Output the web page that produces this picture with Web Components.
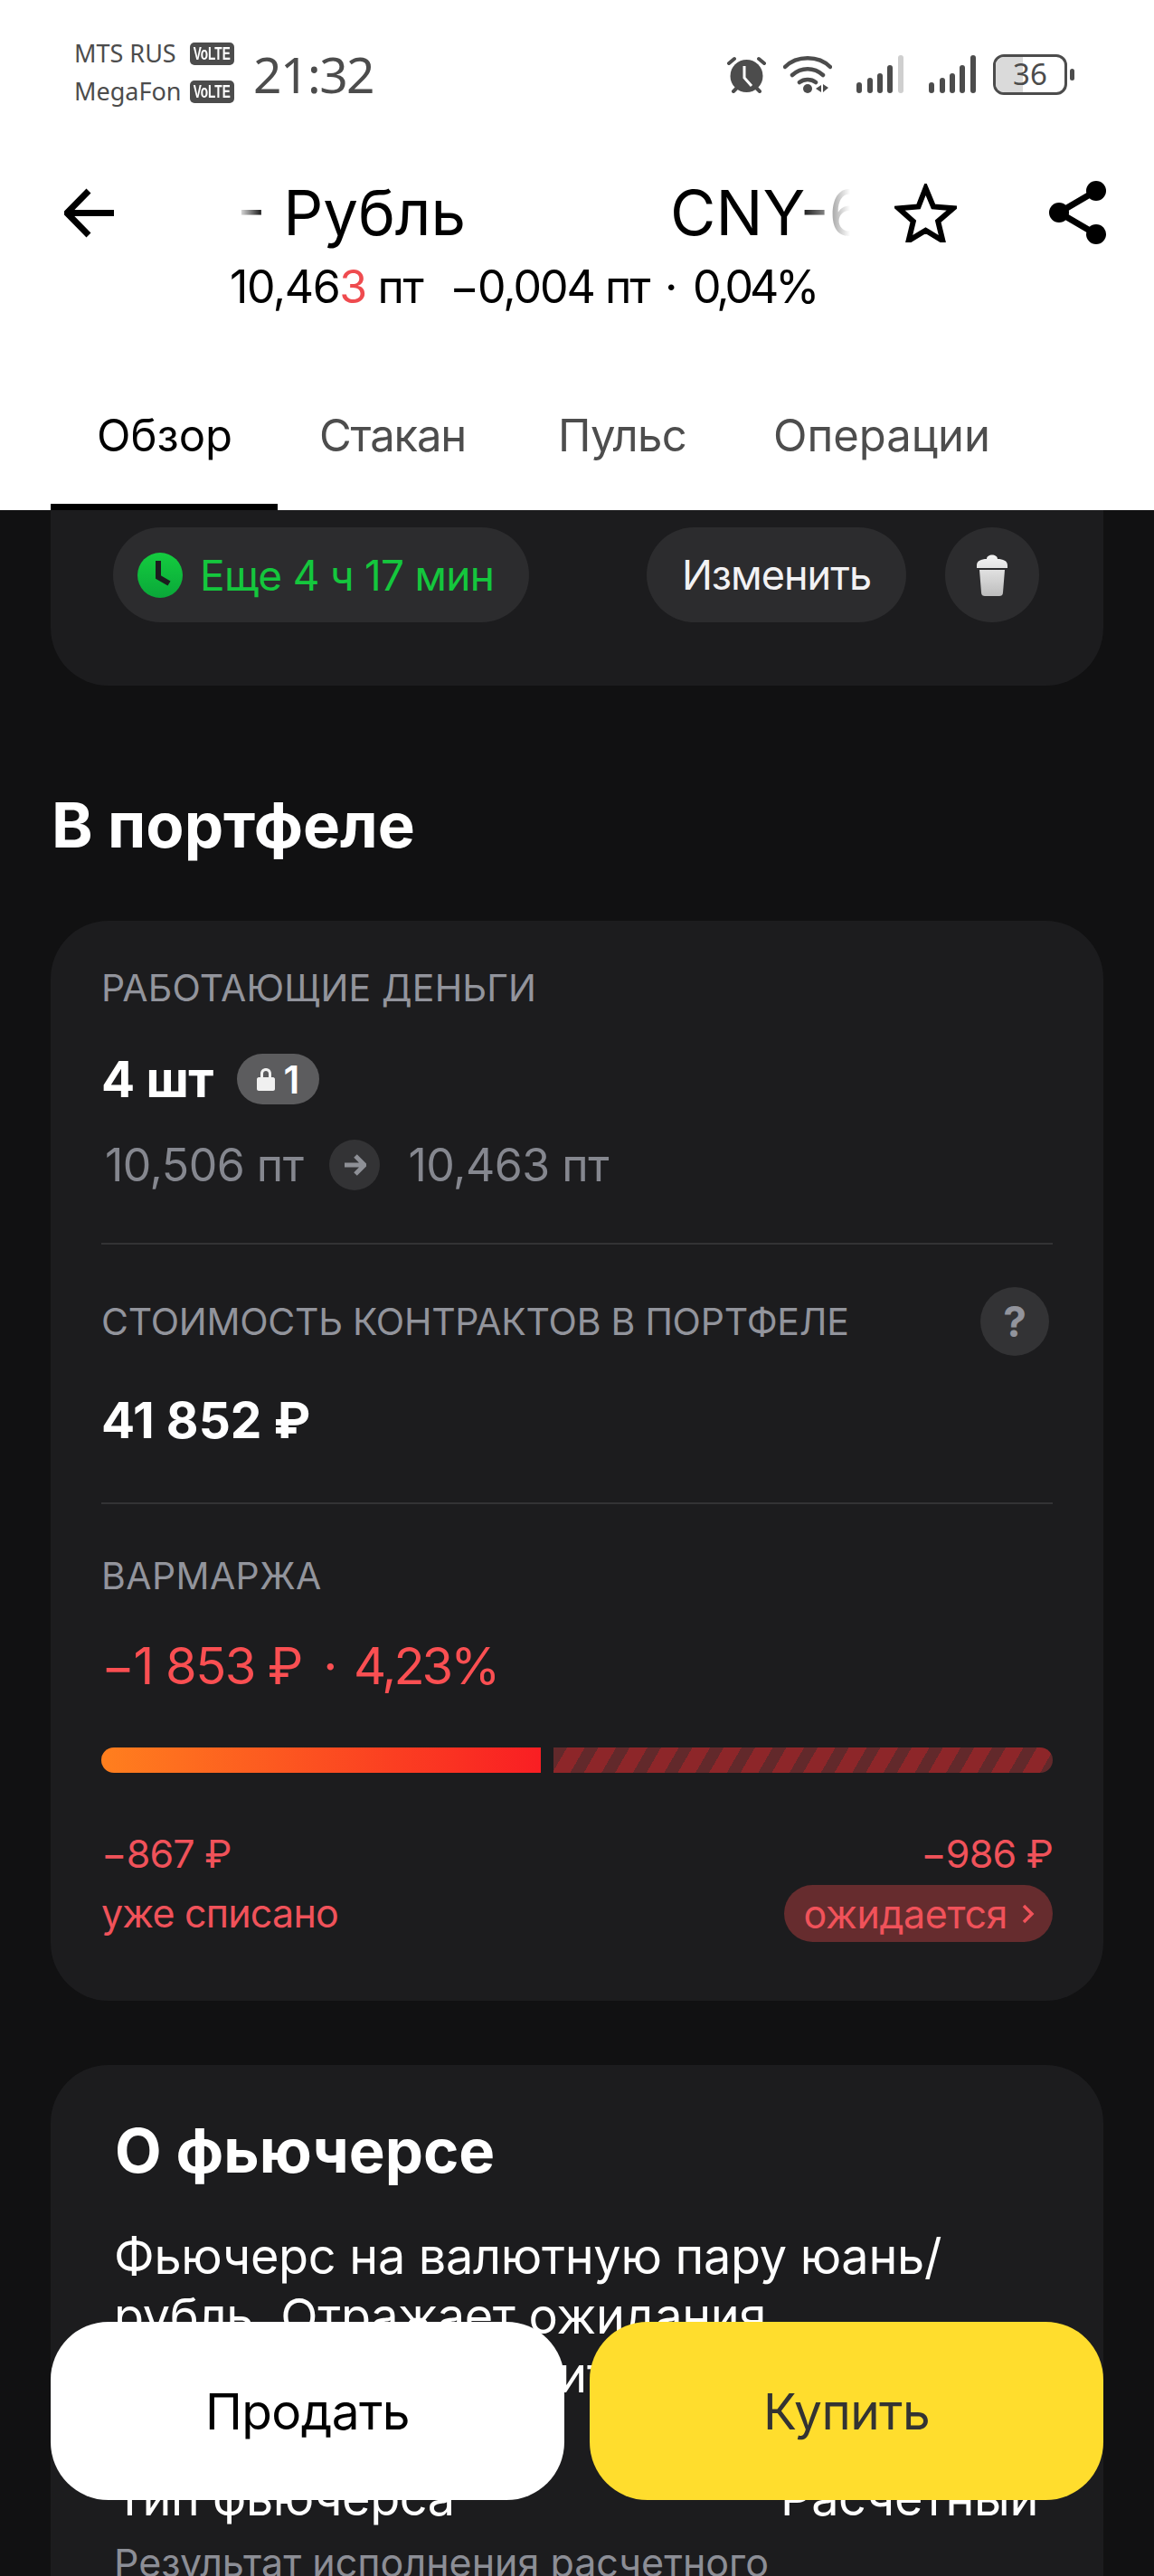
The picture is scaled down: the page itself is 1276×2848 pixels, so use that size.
<!DOCTYPE html>
<html lang="ru">
<head>
<meta charset="utf-8">
<title>CNY</title>
<style>
  html, body { margin: 0; padding: 0; background: #111112; }
  body { width: 1276px; height: 2848px; overflow: hidden; position: relative; font-family: Inter, "Noto Sans", sans-serif; }
</style>
</head>
<body>
<mx-status-bar></mx-status-bar>
<mx-top-bar></mx-top-bar>
<mx-tabs></mx-tabs>
<mx-timer-card></mx-timer-card>
<mx-section-title>В портфеле</mx-section-title>
<mx-portfolio-card></mx-portfolio-card>
<mx-about-card></mx-about-card>
<mx-action-bar></mx-action-bar>

<script>
// small helper, every element is the same: open shadow root + own style
class Base extends HTMLElement {
  constructor() {
    super();
    this.attachShadow({mode: 'open'});
    this.shadowRoot.innerHTML = this.constructor.markup;
  }
}

class StatusBar extends Base {
  static markup = `
    <style>
      :host { display: flex; align-items: flex-start; height: 180px; background: #fff; color: #4c4c4c; font-family: "Noto Sans", sans-serif; box-sizing: border-box; padding: 44px 88px 0 82px; }
      .ops { display: grid; grid-template-columns: 128px auto; row-gap: 12px; font-size: 27px; line-height: 30px; align-items: center; }
      .lte { display: block; width: 49px; height: 25px; border-radius: 5px; background: #4c4c4c; color: #fff; font: 700 20px/25px "Liberation Sans", sans-serif; text-align: center; overflow: hidden; }
      .lte span { display: inline-block; transform: scaleX(.68); transform-origin: center; margin: 0 -12px; }
      .time { font-size: 55px; line-height: 60px; margin: 8px 0 0 21px; letter-spacing: -1.5px; }
      .icons { margin-left: auto; display: flex; align-items: center; margin-top: 15px; height: 46px; }
      svg { display: block; }
      .batt { position: relative; width: 82px; height: 45px; box-sizing: border-box; border: 3px solid #4c4c4c; border-radius: 12px; overflow: hidden; font-size: 33px; line-height: 38px; text-align: center; }
      .batt::before { content: ""; position: absolute; left: 0; top: 0; bottom: 0; width: 40%; background: #dadada; }
      .batt span { position: relative; }
      .cap { width: 5px; height: 13px; background: #4c4c4c; border-radius: 3px; margin-left: 3px; }
    </style>
    <div class="ops">
      <span>MTS RUS</span><span class="lte"><span>VoLTE</span></span>
      <span>MegaFon</span><span class="lte"><span>VoLTE</span></span>
    </div>
    <div class="time">21:32</div>
    <div class="icons">
      <svg width="45" height="42" viewBox="0 0 45 42"><circle cx="22.5" cy="23" r="18" fill="#4c4c4c"/><path d="M3 9l6-5M42 9l-6-5M8 40l3-3M37 40l-3-3" stroke="#4c4c4c" stroke-width="4" stroke-linecap="round"/><path d="M20 12v13l8 9" fill="none" stroke="#fff" stroke-width="3"/></svg>
      <svg style="margin-left:18px" width="54" height="42" viewBox="0 0 54 42"><path d="M2 13C15 0 39 0 52 13M10 22c10-9 24-9 34 0M18 30c5-4 13-4 18 0" fill="none" stroke="#4c4c4c" stroke-width="4.5" stroke-linecap="round"/><circle cx="27" cy="37" r="5" fill="#4c4c4c"/><path d="M36 37l6-4v8zM44 32v9l6-5z" fill="#4c4c4c"/></svg>
      <svg style="margin-left:27px" width="53" height="42" viewBox="0 0 53 42"><g stroke-width="6" stroke-linecap="round" stroke="#4c4c4c"><path d="M3 33v6M15 28v11M26 23v16M37 14v25"/><path d="M49 3v36" stroke="#cfcfcf"/></g></svg>
      <svg style="margin-left:27px" width="53" height="42" viewBox="0 0 53 42"><g stroke-width="6" stroke-linecap="round" stroke="#4c4c4c"><path d="M3 33v6M15 28v11M26 23v16M37 14v25M49 3v36"/></g></svg>
      <div class="batt" style="margin-left:18px"><span>36</span></div>
      <div class="cap"></div>
    </div>`;
}

class TopBar extends Base {
  static markup = `
    <style>
      :host { display: block; background: #fff; height: 110px; position: relative; color: #000; font-family: Inter, "Noto Sans", sans-serif; }
      .row { display: flex; align-items: center; height: 110px; padding-left: 71px; padding-right: 53px; }
      .title { width: 678px; margin-left: 136px; overflow: hidden; white-space: nowrap; font-size: 69px; line-height: 110px;
        -webkit-mask-image: linear-gradient(90deg, transparent 0, #000 30px, #000 620px, transparent 678px);
        mask-image: linear-gradient(90deg, transparent 0, #000 30px, #000 620px, transparent 678px); }
      .gap { display: inline-block; width: 226px; }
      .star { margin-left: 49px; }
      .share { margin-left: auto; }
      svg { display: block; flex: none; }
    </style>
    <div class="row">
      <svg width="55" height="55" viewBox="0 0 55 55"><path d="M27 3L3 27.5 27 52M3 27.5h52" fill="none" stroke="#000" stroke-width="7"/></svg>
      <div class="title">- Рубль<span class="gap"></span>CNY-6</div>
      <svg class="star" width="69" height="65" viewBox="0 0 69 65"><path d="M34.5 5l8.5 20.5 22 1.8-16.8 14.4 5.2 21.5-18.9-11.5-18.9 11.500 5.2-21.5L4.500 27.300l22-1.800z" fill="none" stroke="#000" stroke-width="6"/></svg>
      <svg class="share" width="63" height="70" viewBox="0 0 63 70"><circle cx="52" cy="11" r="11"/><circle cx="11" cy="35" r="11"/><circle cx="52" cy="59" r="11"/><path d="M52 11L11 35l41 24" fill="none" stroke="#000" stroke-width="7"/></svg>
    </div>`;
}

class Tabs extends Base {
  static markup = `
    <style>
      :host { display: block; background: #fff; height: 274px; box-sizing: border-box; font-family: Inter, "Noto Sans", sans-serif; }
      .quote { display: flex; padding-left: 254px; font-size: 50px; line-height: 54px; white-space: pre; color: #000; letter-spacing: -1.4px; }
      .quote b { font-weight: 400; color: #ef4b4f; }
      .quote span { display: block; }
      nav { display: flex; margin: 108px 0 0 56px; height: 112px; align-items: flex-start; font-size: 49px; color: #4d4d4d; line-height: 60px; }
      a { display: block; }
      .on { color: #000; width: 251px; height: 112px; box-sizing: border-box; padding-left: 51px; border-bottom: 7px solid #000; }
    </style>
    <div class="quote">
      <span style="width:243px">10,46<b>3</b> пт</span>
      <span style="width:238px;letter-spacing:-2px">−0,004 пт</span>
      <span style="width:31px">·</span>
      <span style="letter-spacing:-4px">0,04%</span>
    </div>
    <nav>
      <a class="on">Обзор</a>
      <a style="margin-left:46px;width:264px;letter-spacing:-1.2px">Стакан</a>
      <a style="width:238px;letter-spacing:-.7px">Пульс</a>
      <a>Операции</a>
    </nav>`;
}

class TimerCard extends Base {
  static markup = `
    <style>
      :host { display: flex; align-items: center; margin: 0 56px; height: 194px; box-sizing: border-box; padding: 19px 71px 70px 69px; background: #1c1c1e; border-radius: 0 0 64px 64px; font-family: Inter, "Noto Sans", sans-serif; }
      .pill { height: 105px; border-radius: 53px; background: #2c2c2e; display: flex; align-items: center; box-sizing: border-box; font-size: 46px; }
      .left { width: 460px; padding-left: 27px; color: #14c73d; gap: 19px; letter-spacing: -.7px; }
      .edit { width: 287px; margin-left: auto; justify-content: center; color: #f2f2f4; font-size: 45px; letter-spacing: -1px; }
      .bin { width: 104px; margin-left: 43px; justify-content: center; }
      svg { display: block; }
    </style>
    <div class="pill left">
      <svg width="50" height="50" viewBox="0 0 50 50"><defs><linearGradient id="g" x1="0" y1="0" x2="0" y2="1"><stop offset="0" stop-color="#14cc3f"/><stop offset="1" stop-color="#0aa839"/></linearGradient></defs><circle cx="25" cy="25" r="25" fill="url(#g)"/><path d="M23 9v18l12 7" fill="none" stroke="#1c1c1e" stroke-width="6"/></svg>
      <span>Еще 4 ч 17 мин</span>
    </div>
    <div class="pill edit">Изменить</div>
    <div class="pill bin">
      <svg width="34" height="46" viewBox="0 0 34 46"><defs><linearGradient id="t" x1="0" y1="0" x2="0" y2="1"><stop offset="0" stop-color="#f4f4f4"/><stop offset="1" stop-color="#bdbdbd"/></linearGradient></defs><path d="M11 5c0-6 12-6 12 0 6 0 11 2 11 7v3H0v-3C0 7 5 5 11 5zM3 17h28l-2 25c0 3-2 4-4 4H9c-2 0-4-1-4-4z" fill="url(#t)"/></svg>
    </div>`;
}

class SectionTitle extends Base {
  static markup = `
    <style>
      :host { display: block; padding: 112px 0 0 57px; color: #fff; font: 700 69px/84px Inter, "Noto Sans", sans-serif; height: 84px; margin-bottom: 64px; }
    </style>
    <slot></slot>`;
}

class PortfolioCard extends Base {
  static markup = `
    <style>
      :host { display: block; margin: 0 56px; height: 1194px; box-sizing: border-box; padding: 44px 56px 0; background: #1c1c1e; border-radius: 64px; color: #fff; font-family: Inter, "Noto Sans", sans-serif; }
      .label { font-size: 41px; line-height: 60px; color: #92949c; white-space: nowrap; }
      .row { display: flex; align-items: center; }
      .strong { font-size: 55px; font-weight: 700; line-height: 70px; letter-spacing: -.4px; }
      .lock { display: flex; align-items: center; justify-content: center; gap: 10px; width: 91px; height: 56px; margin-left: 26px; border-radius: 28px; background: #5c5c5e; font-size: 42px; font-weight: 600; }
      .prices { font-size: 50px; line-height: 60px; color: #85878f; letter-spacing: -.5px; }
      .dot { width: 56px; height: 56px; border-radius: 50%; background: #333335; display: flex; align-items: center; justify-content: center; margin: 0 32px 0 28px; }
      hr { border: 0; height: 2px; background: #333335; margin: 0; }
      .help { margin-left: auto; margin-right: 4px; width: 76px; height: 76px; border-radius: 50%; background: #333335; color: #92949c; font-size: 46px; font-weight: 700; text-align: center; line-height: 76px; }
      .big { font-size: 56px; line-height: 70px; color: #fa4f52; letter-spacing: -1.5px; white-space: pre; }
      .bar { display: flex; gap: 14px; height: 28px; margin-top: 55px; }
      .bar i { display: block; height: 28px; }
      .done { width: 486px; border-radius: 14px 0 0 14px; background: linear-gradient(90deg, #ff7f1e, #f91e23); }
      .wait { flex: 1; border-radius: 0 14px 14px 0; background: repeating-linear-gradient(120deg, #62292b 0 13px, #8d2629 13px 30px); }
      .split { display: flex; justify-content: space-between; margin-top: 63px; font-size: 43px; line-height: 52px; color: #f0525a; letter-spacing: -.8px; }
      .split > div { display: flex; flex-direction: column; align-items: flex-start; }
      .split > div:last-child { align-items: flex-end; }
      .chip { display: flex; align-items: center; gap: 16px; height: 63px; padding: 0 20px 0 22px; border-radius: 32px; background: #662c2e; margin-top: 9px; letter-spacing: -.4px; }
    </style>
    <div class="label" style="letter-spacing:.2px">РАБОТАЮЩИЕ ДЕНЬГИ</div>
    <div class="row" style="margin-top:36px">
      <span class="strong">4 шт</span>
      <span class="lock"><svg width="20" height="26" viewBox="0 0 20 26"><path d="M4 11V7c0-8 12-8 12 0v4h2c1 0 2 1 2 2v11c0 1-1 2-2 2H2c-1 0-2-1-2-2V13c0-1 1-2 2-2zm3 0h6V7c0-4-6-4-6 0z" fill="#f0f0f0"/></svg>1</span>
    </div>
    <div class="row prices" style="margin:30px 0 0 4px">
      <span>10,506 пт</span>
      <span class="dot"><svg width="26" height="26" viewBox="0 0 26 26"><path d="M14 3l10 10-10 10M23 13H2" fill="none" stroke="#8e9096" stroke-width="5"/></svg></span>
      <span>10,463 пт</span>
    </div>
    <hr style="margin-top:56px">
    <div class="row" style="margin-top:47px;height:76px">
      <span class="label" style="letter-spacing:-.25px">СТОИМОСТЬ КОНТРАКТОВ В ПОРТФЕЛЕ</span>
      <span class="help">?</span>
    </div>
    <div class="strong" style="margin-top:36px;letter-spacing:0">41 852 ₽</div>
    <hr style="margin-top:56px">
    <div class="label" style="margin-top:49px;letter-spacing:.4px">ВАРМАРЖА</div>
    <div class="big" style="margin-top:35px">−1 853 ₽ <span style="margin:0 5px 0 9px">·</span> <span style="letter-spacing:-3px">4,23%</span></div>
    <div class="bar"><i class="done"></i><i class="wait"></i></div>
    <div class="split">
      <div><span>−867 ₽</span><span style="margin-top:14px">уже списано</span></div>
      <div><span>−986 ₽</span><span class="chip">ожидается <svg width="14" height="22" viewBox="0 0 14 22"><path d="M2 2l9 9-9 9" fill="none" stroke="#f0525a" stroke-width="3.500"/></svg></span></div>
    </div>`;
}

class AboutCard extends Base {
  static markup = `
    <style>
      :host { display: block; margin: 71px 56px 0; height: 700px; box-sizing: border-box; padding: 55px 48px 0 71px; background: #1c1c1e; border-radius: 64px 64px 0 0; color: #fff; font-family: Inter, "Noto Sans", sans-serif; }
      h2 { margin: 0; font-size: 67px; line-height: 80px; font-weight: 700; }
      p { margin: 44px 0 0 -1px; font-size: 54px; line-height: 65.500px; width: 960px; letter-spacing: -.3px; }
      .type { display: flex; justify-content: space-between; font-size: 54px; line-height: 66px; margin-left: -1px; padding-right: 24px; letter-spacing: -.4px; }
      .hint { font-size: 43px; line-height: 60px; color: #8c8e96; margin: 8px 0 0 -1px; white-space: nowrap; }
    </style>
    <h2>О фьючерсе</h2>
    <p>Фьючерс на валютную пару юань/ рубль. Отражает ожидания трейдеров и зависит от курса</p>
    <div class="type" style="margin-top:70px"><span>Тип фьючерса</span><span>Расчетный</span></div>
    <div class="hint">Результат исполнения расчетного</div>`;
}

class ActionBar extends Base {
  static markup = `
    <style>
      :host { position: absolute; left: 56px; right: 56px; top: 2567px; display: grid; grid-template-columns: 1fr 1fr; gap: 28px; font-family: Inter, "Noto Sans", sans-serif; font-size: 55px; letter-spacing: -.6px; }
      div { height: 197px; border-radius: 64px; display: flex; align-items: center; justify-content: center; }
      .sell { background: #fff; color: #000; }
      .buy { background: #ffdd2d; color: #333; }
    </style>
    <div class="sell">Продать</div>
    <div class="buy">Купить</div>`;
}

customElements.define('mx-status-bar', StatusBar);
customElements.define('mx-top-bar', TopBar);
customElements.define('mx-tabs', Tabs);
customElements.define('mx-timer-card', TimerCard);
customElements.define('mx-section-title', SectionTitle);
customElements.define('mx-portfolio-card', PortfolioCard);
customElements.define('mx-about-card', AboutCard);
customElements.define('mx-action-bar', ActionBar);
</script>
</body>
</html>
